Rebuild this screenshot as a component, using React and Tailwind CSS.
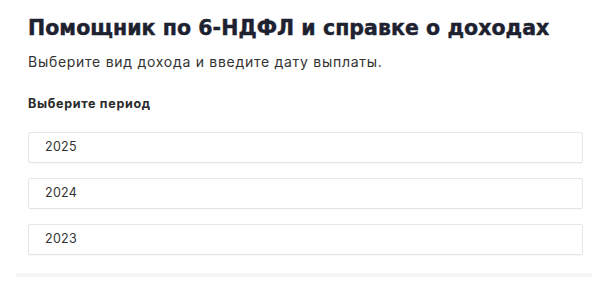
export default function App() {
  const years = ["2025", "2024", "2023"];
  return (
    <div className="w-[598px] h-[299px] bg-white overflow-hidden" style={{ fontFamily: 'Inter, "Noto Sans", sans-serif' }}>
      <div className="pl-[28px] pr-[15px] pt-[14px]">
        <h1
          className="text-[20.5px] leading-[28px] font-bold text-[#1e2230] tracking-[0.05px] whitespace-nowrap [-webkit-text-stroke:0.45px_#1e2230]"
          style={{ fontFamily: '"DejaVu Sans", sans-serif' }}
        >
          Помощник по 6-НДФЛ и справке о доходах
        </h1>
        <p className="mt-[10px] text-[14px] leading-[20px] text-[#333333] tracking-[0.72px]">
          Выберите вид дохода и введите дату выплаты.
        </p>
        <div className="mt-[24px] text-[12.5px] leading-[16px] font-bold text-[#2a2a2a] tracking-[0.7px]">Выберите период</div>
        <div className="mt-[20px] flex flex-col gap-[15px]">
          {years.map((y) => (
            <div key={y} className="h-[31px] border border-[#e6e6e6] rounded-[2px] shadow-[0_1px_1px_rgba(0,0,0,0.03)] flex items-center pl-[16px] text-[12.5px] text-[#333333] tracking-[0.3px]">
              {y}
            </div>
          ))}
        </div>
      </div>
      <div className="ml-[16px] mr-[6px] mt-[18px] h-[4px] bg-[#f5f5f5]"></div>
    </div>
  );
}
